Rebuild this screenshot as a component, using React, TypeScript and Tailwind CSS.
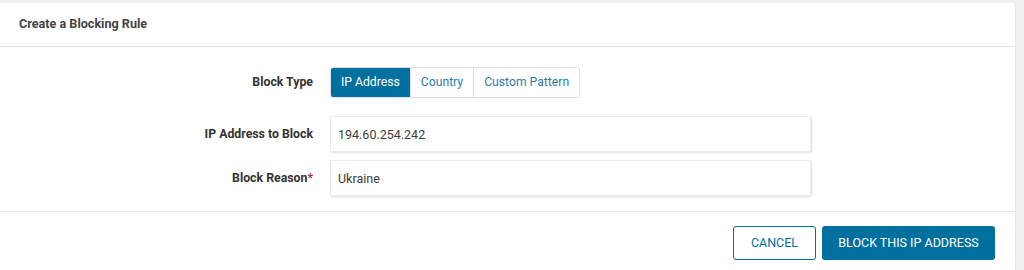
import { useState } from 'react';

const types = ['IP Address', 'Country', 'Custom Pattern'];

export default function App() {
    const [blockType, setBlockType] = useState('IP Address');
    const [ip, setIp] = useState('194.60.254.242');
    const [reason, setReason] = useState('Ukraine');

    return (
        <div className="h-[270px] bg-[#f0f0f1] pt-[3px] pr-2 font-['Roboto',sans-serif]">
            <div className="h-full bg-white border-r border-[#e3e8ee]">
                <div className="h-[44px] border-b border-[#e2e4e7] px-[19px] flex items-center">
                    <h3 className="text-[12.6px] font-bold text-[#444]">Create a Blocking Rule</h3>
                </div>

                <div className="pt-[20px] pb-[15px] border-b border-[#e8e8e8]">
                    <div className="flex items-center">
                        <label className="w-[313px] text-right text-[12.3px] font-bold text-[#333]">Block Type</label>
                        <div className="ml-[17px] flex h-[31px] rounded-[3px] border border-[#e0e0e0] overflow-hidden">
                            {types.map((t, i) => (
                                <button
                                    key={t}
                                    onClick={() => setBlockType(t)}
                                    className={`px-[10px] text-[12.2px] ${i > 0 ? 'border-l border-[#e0e0e0]' : ''} ${blockType === t ? 'bg-[#00709e] text-white' : 'bg-white text-[#2a7db0]'}`}
                                >
                                    {t}
                                </button>
                            ))}
                        </div>
                    </div>

                    <div className="flex items-center mt-[18px]">
                        <label className="w-[313px] text-right text-[12.3px] font-bold text-[#333]">IP Address to Block</label>
                        <input
                            value={ip}
                            onChange={(e) => setIp(e.target.value)}
                            className="ml-[17px] w-[481px] h-[36px] px-[7px] text-[12.5px] text-[#3c3c3c] border border-[#ececec] shadow-[1px_1px_2px_rgba(0,0,0,0.12)] outline-none"
                        />
                    </div>

                    <div className="flex items-center mt-[8px]">
                        <label className="w-[313px] text-right text-[12.3px] font-bold text-[#333]">
                            Block Reason<span className="text-[#b32d2e]">*</span>
                        </label>
                        <input
                            value={reason}
                            onChange={(e) => setReason(e.target.value)}
                            className="ml-[17px] w-[481px] h-[36px] px-[7px] text-[12.5px] text-[#3c3c3c] border border-[#ececec] shadow-[1px_1px_2px_rgba(0,0,0,0.12)] outline-none"
                        />
                    </div>
                </div>

                <div className="flex justify-end gap-[6px] pt-[14px] pr-[20px]">
                    <button className="w-[83px] h-[34px] rounded-[3px] border border-[#00709e] text-[12.5px] text-[#00709e] bg-white">
                        CANCEL
                    </button>
                    <button className="w-[173px] h-[34px] rounded-[3px] bg-[#00709e] text-[12.5px] text-white">
                        BLOCK THIS IP ADDRESS
                    </button>
                </div>
            </div>
        </div>
    );
}
